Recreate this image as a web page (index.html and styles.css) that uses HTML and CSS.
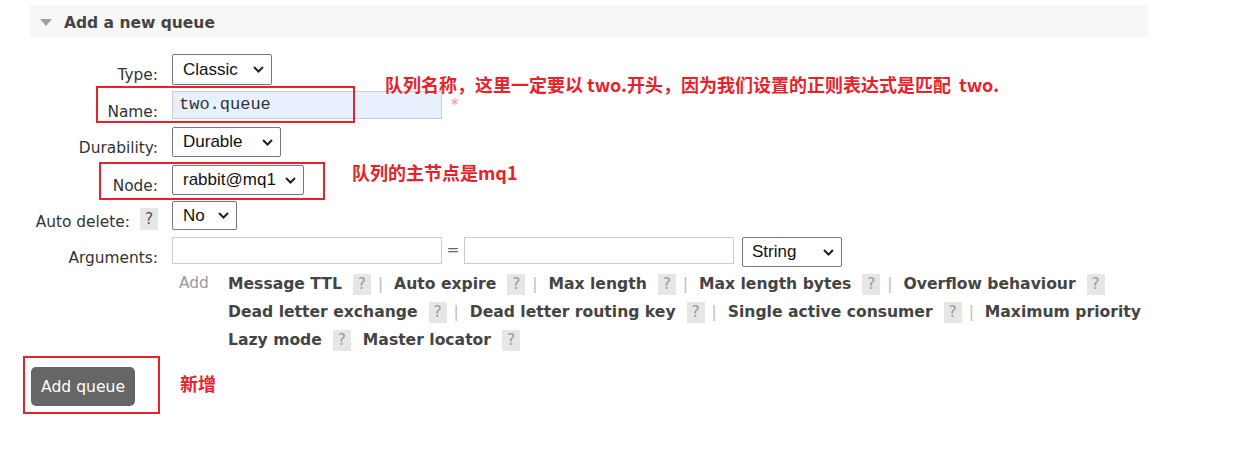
FILE: index.html
```html
<!DOCTYPE html>
<html lang="zh-CN">
<head>
<meta charset="utf-8">
<title>Add a new queue</title>
<link rel="stylesheet" href="styles.css">
</head>
<body>
<div class="page">
  <div class="section-head">
    <span class="tri"></span>
    <h2 class="title">Add a new queue</h2>
  </div>

  <form class="form">
    <div class="row r-type">
      <label class="lbl">Type:</label>
      <div class="sel w-type"><span>Classic</span><svg class="chev" width="11" height="7" viewBox="0 0 11 7"><path d="M1 1L5.5 5.5L10 1"/></svg></div>
    </div>
    <div class="row r-name">
      <label class="lbl">Name:</label>
      <div class="txt name-in">two.queue</div>
      <span class="req">*</span>
    </div>
    <div class="row r-dur">
      <label class="lbl">Durability:</label>
      <div class="sel w-dur"><span>Durable</span><svg class="chev" width="11" height="7" viewBox="0 0 11 7"><path d="M1 1L5.5 5.5L10 1"/></svg></div>
    </div>
    <div class="row r-node">
      <label class="lbl">Node:</label>
      <div class="sel w-node"><span>rabbit@mq1</span><svg class="chev" width="11" height="7" viewBox="0 0 11 7"><path d="M1 1L5.5 5.5L10 1"/></svg></div>
    </div>
    <div class="row r-auto">
      <label class="lbl lbl-help"><span>Auto delete:</span><span class="help help-lbl">?</span></label>
      <div class="sel w-auto"><span>No</span><svg class="chev" width="11" height="7" viewBox="0 0 11 7"><path d="M1 1L5.5 5.5L10 1"/></svg></div>
    </div>
    <div class="row r-args">
      <label class="lbl">Arguments:</label>
      <div class="txt arg-in"></div>
      <span class="eq">=</span>
      <div class="txt arg-in"></div>
      <div class="sel w-str"><span>String</span><svg class="chev" width="11" height="7" viewBox="0 0 11 7"><path d="M1 1L5.5 5.5L10 1"/></svg></div>
    </div>
    <div class="addrow">
      <span class="add-lbl">Add</span>
      <div class="arglines">
        <div class="argline">
          <span class="arg">Message TTL</span><span class="help">?</span><span class="sep">|</span>
          <span class="arg">Auto expire</span><span class="help">?</span><span class="sep">|</span>
          <span class="arg">Max length</span><span class="help">?</span><span class="sep">|</span>
          <span class="arg">Max length bytes</span><span class="help">?</span><span class="sep">|</span>
          <span class="arg">Overflow behaviour</span><span class="help">?</span>
        </div>
        <div class="argline">
          <span class="arg">Dead letter exchange</span><span class="help">?</span><span class="sep">|</span>
          <span class="arg">Dead letter routing key</span><span class="help">?</span><span class="sep">|</span>
          <span class="arg">Single active consumer</span><span class="help">?</span><span class="sep">|</span>
          <span class="arg">Maximum priority</span>
        </div>
        <div class="argline">
          <span class="arg">Lazy mode</span><span class="help">?</span>
          <span class="arg gap">Master locator</span><span class="help">?</span>
        </div>
      </div>
    </div>
    <div class="actions">
      <button type="button" class="btn">Add queue</button>
    </div>
  </form>

  <div class="mark mark-name"></div>
  <div class="mark mark-node"></div>
  <div class="mark mark-btn"></div>
  <div class="note note-name">队列名称，这里一定要以 two.开头，因为我们设置的正则表达式是匹配&nbsp; two.</div>
  <div class="note note-node">队列的主节点是mq1</div>
  <div class="note note-btn">新增</div>
</div>
</body>
</html>
```

FILE: styles.css
```css
html, body {
  margin: 0;
  padding: 0;
  background: #ffffff;
}

body {
  font-family: "DejaVu Sans", Verdana, sans-serif;
  font-size: 15.4px;
  color: #333333;
}

.page {
  position: relative;
  width: 1256px;
  height: 461px;
  padding-top: 5px;
  box-sizing: border-box;
  overflow: hidden;
}

.section-head {
  margin-left: 30px;
  width: 1118px;
  height: 32px;
  background: #f7f7f7;
  display: flex;
  align-items: center;
}

.tri {
  width: 0;
  height: 0;
  border-left: 6px solid transparent;
  border-right: 6px solid transparent;
  border-top: 7px solid #a0a0a0;
  margin-left: 10px;
  margin-right: 12px;
  margin-top: 2px;
}

.title {
  margin: 3px 0 0 0;
  font-size: 15.5px;
  font-weight: bold;
  color: #444444;
}

.form {
  margin: 17px 0 0 0;
}

.row {
  display: flex;
  align-items: flex-start;
}

.r-type { height: 37px; }
.r-name { height: 36px; }
.r-dur  { height: 38px; }
.r-node { height: 36px; }
.r-auto { height: 36px; }
.r-args { height: 33px; }

.lbl {
  flex: none;
  width: 158px;
  margin-right: 14px;
  padding-top: 12px;
  line-height: 18px;
  text-align: right;
  color: #333333;
}

.lbl-help {
  display: flex;
  justify-content: flex-end;
  align-items: flex-start;
}

.help {
  display: inline-block;
  width: 18px;
  height: 21px;
  line-height: 21px;
  text-align: center;
  background: #e6e6e6;
  color: #999999;
  font-weight: normal;
  font-size: 15.4px;
  margin-left: 11px;
}

.help-lbl {
  margin-left: 10px;
  margin-top: -5px;
  height: 22px;
  line-height: 22px;
  color: #555555;
}

.sel {
  flex: none;
  display: flex;
  align-items: center;
  justify-content: space-between;
  box-sizing: border-box;
  height: 31px;
  padding: 0 7px 0 10px;
  border: 1px solid #767676;
  border-radius: 2px;
  background: #ffffff;
  font-family: "Liberation Sans", Arial, sans-serif;
  font-size: 17px;
  color: #111111;
}

.r-node .sel, .r-dur .sel { height: 30px; }
.r-auto .sel { height: 29px; }

.chev path {
  fill: none;
  stroke: #222222;
  stroke-width: 2;
}

.w-type { width: 100px; }
.w-dur  { width: 109px; }
.w-node { width: 132px; }
.w-auto { width: 65px; }
.w-str  { width: 100px; height: 30px; margin-left: 8px; padding-left: 9px; }

.txt {
  flex: none;
  box-sizing: border-box;
  border: 1px solid #cccccc;
  background: #ffffff;
}

.name-in {
  width: 270px;
  height: 28px;
  background: #e8f0fe;
  padding-left: 6px;
  font-family: "Liberation Mono", "Courier New", monospace;
  font-size: 17px;
  line-height: 26px;
  color: #333333;
}

.req {
  margin-left: 9px;
  margin-top: 8px;
  line-height: 12px;
  height: 12px;
  color: #f29494;
  font-size: 15px;
}

.arg-in {
  width: 270px;
  height: 27px;
}

.eq {
  width: 22px;
  text-align: center;
  line-height: 27px;
  color: #666666;
}

.addrow {
  display: flex;
  align-items: flex-start;
  margin-left: 179px;
}

.add-lbl {
  flex: none;
  width: 49px;
  line-height: 26px;
  color: #999999;
}

.arglines {
  display: flex;
  flex-direction: column;
}

.argline {
  display: flex;
  align-items: center;
  height: 28px;
  white-space: nowrap;
}

.arg {
  font-weight: bold;
  font-size: 15.6px;
  color: #444444;
}

.arg.gap {
  margin-left: 12px;
}

.sep {
  color: #bbbbbb;
  margin: 0 11px 0 7px;
}

.actions {
  margin: 13px 0 0 31px;
}

.btn {
  display: block;
  width: 104px;
  height: 39px;
  padding: 0;
  border: none;
  border-radius: 5px;
  background: #666666;
  color: #ffffff;
  font-family: "DejaVu Sans", Verdana, sans-serif;
  font-size: 15.6px;
}

.mark {
  position: absolute;
  border: 2px solid #e8222b;
  box-sizing: border-box;
}

.mark-name { left: 96px; top: 86px; width: 259px; height: 37px; }
.mark-node { left: 99px; top: 162px; width: 226px; height: 38px; }
.mark-btn  { left: 23px; top: 356px; width: 137px; height: 58px; }

.note {
  position: absolute;
  font-family: "Noto Sans CJK SC", "Noto Sans", sans-serif;
  font-weight: bold;
  font-size: 18px;
  line-height: 18px;
  color: #e8222b;
  white-space: nowrap;
}

.note-name { left: 385px; top: 75px; }
.note-node { left: 352px; top: 163px; }
.note-btn  { left: 180px; top: 374px; }
```
